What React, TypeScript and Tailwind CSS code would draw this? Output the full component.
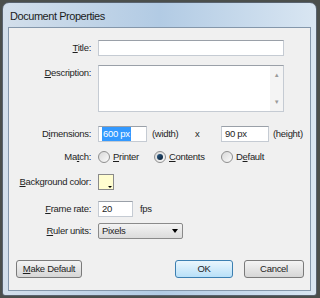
import React from "react";

const font = { fontFamily: '"Liberation Sans", Arial, sans-serif' };

function U({ children }: { children: React.ReactNode }) {
  return <span className="underline underline-offset-[1px]">{children}</span>;
}

function Radio({ checked }: { checked?: boolean }) {
  return (
    <span className="relative inline-flex h-[12px] w-[12px] shrink-0 items-center justify-center rounded-full border border-[#8f8f8f] bg-gradient-to-br from-[#d8d8d8] to-[#fbfbfb]">
      {checked && (
        <span className="h-[6px] w-[6px] rounded-full bg-gradient-to-br from-[#2b5d8a] to-[#0b1f33]" />
      )}
    </span>
  );
}

function Label({ children, top }: { children: React.ReactNode; top?: boolean }) {
  return (
    <div className={`w-[82px] shrink-0 text-right ${top ? "self-start pt-[1px]" : ""}`}>
      {children}
    </div>
  );
}

const inputCls =
  "h-[16px] shrink-0 border border-[#c5cbd3] border-t-[#9aa0a8] bg-white flex items-center px-[3px]";

export default function App() {
  return (
    <div className="h-[298px] w-[320px] bg-[#4b4f4c] p-[2px] pr-[3px]" style={font}>
      <div className="flex h-[294px] flex-col rounded-t-[7px] rounded-b-[3px] border border-[#59636f] bg-gradient-to-r from-[#d3dfeb] via-[#b2cbe4] to-[#d9e6f2] px-[5px] pb-[4px]">
        <div className="flex h-[24px] items-center pl-[2px] pt-[2px] text-[11px] tracking-[-0.45px] text-[#1c1c1c]">
          Document Properties
        </div>
        <div className="flex flex-1 flex-col border border-[#8497ab] bg-[#f0f0f0] text-[9.5px] tracking-[-0.3px] text-[#1e1e1e]">
          <div className="mt-[12px] flex h-[16px] items-center gap-[7px]">
            <Label>
              <U>T</U>itle:
            </Label>
            <div className={`${inputCls} w-[186px]`} />
          </div>

          <div className="mt-[9px] flex h-[47px] items-center gap-[7px]">
            <Label top>
              <U>D</U>escription:
            </Label>
            <div className="flex h-[47px] w-[186px] justify-end border border-[#c5cbd3] border-t-[#9aa0a8] bg-white">
              <div className="flex w-[13px] flex-col items-center justify-between bg-[#f4f4f4] py-[6px] text-[6px] leading-none text-[#9a9a9a]">
                <span>▲</span>
                <span>▼</span>
              </div>
            </div>
          </div>

          <div className="mt-[14px] flex h-[16px] items-center gap-[7px]">
            <Label>
              D<U>i</U>mensions:
            </Label>
            <div className={`${inputCls} w-[49px]`}>
              <span className="bg-[#3399ff] px-[1px] text-white">600 px</span>
            </div>
            <span className="ml-[-2px] w-[36px] shrink-0">(width)</span>
            <span className="w-[19px] shrink-0">x</span>
            <div className={`${inputCls} w-[48px]`}>90 px</div>
            <span className="ml-[-3px]">(height)</span>
          </div>

          <div className="mt-[7px] flex h-[16px] items-center gap-[7px]">
            <Label>
              Ma<U>t</U>ch:
            </Label>
            <div className="flex items-center">
              <Radio />
              <span className="ml-[3px] inline-block w-[41px]">
                <U>P</U>rinter
              </span>
              <Radio checked />
              <span className="ml-[3px] inline-block w-[52px]">
                <U>C</U>ontents
              </span>
              <Radio />
              <span className="ml-[3px]">
                D<U>e</U>fault
              </span>
            </div>
          </div>

          <div className="mt-[9px] flex h-[16px] items-center gap-[7px]">
            <Label>
              <U>B</U>ackground color:
            </Label>
            <div className="relative h-[16px] w-[16px] border border-[#8a8a8a] bg-[#fffdd0]">
              <span className="absolute bottom-[1px] right-[1px] h-0 w-0 border-x-[2px] border-t-[2px] border-x-transparent border-t-black" />
            </div>
          </div>

          <div className="mt-[11px] flex h-[16px] items-center gap-[7px]">
            <Label>
              <U>F</U>rame rate:
            </Label>
            <div className={`${inputCls} w-[35px]`}>20</div>
            <span>fps</span>
          </div>

          <div className="mt-[6px] flex h-[16px] items-center gap-[7px]">
            <Label>
              <U>R</U>uler units:
            </Label>
            <div className="flex h-[16px] w-[85px] items-center justify-between rounded-[2px] border border-[#8a8a8a] bg-gradient-to-b from-[#f3f3f3] to-[#dcdcdc] pl-[3px] pr-[4px]">
              <span>Pixels</span>
              <span className="h-0 w-0 border-x-[3.5px] border-t-[4px] border-x-transparent border-t-black" />
            </div>
          </div>

          <div className="mt-[21px] flex h-[18px] items-center pl-[7px] pr-[6px]">
            <button className="h-[18px] w-[66px] rounded-[3px] border border-[#7a7a7a] bg-gradient-to-b from-[#f4f4f4] to-[#d6d6d6] text-[9.5px] tracking-[-0.3px] text-[#1e1e1e]">
              <U>M</U>ake Default
            </button>
            <div className="flex-1" />
            <button className="h-[18px] w-[58px] rounded-[3px] border border-[#3c7fb1] bg-gradient-to-b from-[#eaf6fd] to-[#b8e0f8] text-[9.5px] text-[#1e1e1e]">
              OK
            </button>
            <button className="ml-[11px] h-[18px] w-[60px] rounded-[3px] border border-[#7a7a7a] bg-gradient-to-b from-[#f4f4f4] to-[#d6d6d6] text-[9.5px] tracking-[-0.3px] text-[#1e1e1e]">
              Cancel
            </button>
          </div>
        </div>
      </div>
    </div>
  );
}
